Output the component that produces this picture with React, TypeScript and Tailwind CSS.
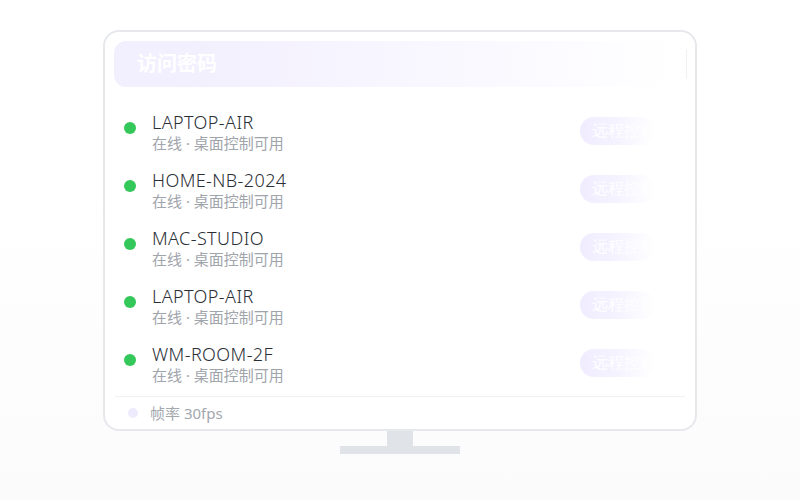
const devices = ["LAPTOP-AIR", "HOME-NB-2024", "MAC-STUDIO", "LAPTOP-AIR", "WM-ROOM-2F"]

export default function App() {
  return (
    <div
      className="flex h-[500px] w-[800px] flex-col items-center bg-gradient-to-b from-white from-40% to-[#fbfbfc] pt-[30px]"
      style={{ fontFamily: '"Noto Sans", "Noto Sans CJK SC", sans-serif' }}
    >
      {/* Screen */}
      <div className="flex h-[401px] w-[594px] flex-col rounded-[16px] border-2 border-[#e6e8ec] bg-white px-[9px] pt-[9px]">
        {/* Header bar */}
        <div className="flex h-[46px] items-center justify-between rounded-[12px] bg-gradient-to-r from-[#f2effe] from-10% via-[#f8f6ff] to-white pl-[23px]">
          <span className="text-[20px] font-bold text-white">访问密码</span>
          <div className="mr-[-1px] h-[30px] w-px bg-[#eef0f3]" />
        </div>

        {/* Device list */}
        <div className="mt-[16px] flex flex-col">
          {devices.map((name, i) => (
            <div key={i} className="flex h-[58px] items-center pl-[10px] pr-[31px]">
              <span className="mb-[8px] h-[12px] w-[12px] shrink-0 rounded-full bg-[#34c759]" />
              <div className="ml-[16px] flex flex-1 flex-col">
                <span className="text-[18px] leading-[22px] font-light tracking-[0.4px] text-[#2a2e35]">{name}</span>
                <span className="text-[15px] leading-[20px] text-[#a0a4ab]">在线 · 桌面控制可用</span>
              </div>
              <span
                className="mb-[2px] flex h-[28px] w-[75px] items-center overflow-hidden rounded-full bg-gradient-to-r from-[#f0ecff] via-[#f5f3ff] to-white pl-[12px] text-[16px] whitespace-nowrap text-white"
                style={{ fontFamily: "serif" }}
              >
                远程控制
              </span>
            </div>
          ))}
        </div>

        {/* Footer */}
        <div className="mx-[1px] mt-[3px] border-t border-[#f0f1f4]" />
        <div className="flex flex-1 items-center pl-[14px]">
          <span className="h-[10px] w-[10px] rounded-full bg-[#eeebfd]" />
          <span className="ml-[12px] text-[15px] text-[#a3a7ae]">帧率 30fps</span>
        </div>
      </div>

      {/* Stand */}
      <div className="h-[15px] w-[26px] bg-[#e0e3e8]" />
      <div className="h-[8px] w-[120px] bg-[#e0e3e8]" />
    </div>
  )
}
